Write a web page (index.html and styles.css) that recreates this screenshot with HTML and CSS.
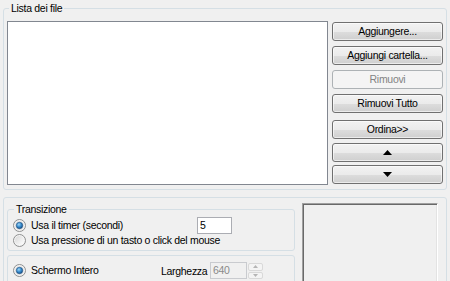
FILE: index.html
```html
<!DOCTYPE html>
<html>
<head>
<meta charset="utf-8">
<link rel="stylesheet" href="styles.css">
</head>
<body>
<svg class="defs" width="0" height="0">
  <defs>
    <linearGradient id="rbfill" x1="0" y1="0" x2="1" y2="1">
      <stop offset="0" stop-color="#d8d8d8"/>
      <stop offset="1" stop-color="#ffffff"/>
    </linearGradient>
    <radialGradient id="dot" cx="0.4" cy="0.35" r="0.7">
      <stop offset="0" stop-color="#9fd6f5"/>
      <stop offset="0.5" stop-color="#3b8fd0"/>
      <stop offset="1" stop-color="#124a82"/>
    </radialGradient>
    <g id="rb-off">
      <circle cx="6.5" cy="6.5" r="6" fill="#f4f4f4" stroke="#8e8f8f"/>
      <circle cx="6.5" cy="6.5" r="4.5" fill="url(#rbfill)"/>
    </g>
    <g id="rb-on">
      <circle cx="6.5" cy="6.5" r="6" fill="#f4f4f4" stroke="#8e8f8f"/>
      <circle cx="6.5" cy="6.5" r="4.5" fill="#e2e2e2"/>
      <circle cx="6.5" cy="6.5" r="3.2" fill="url(#dot)" stroke="#1d4f82" stroke-width="0.6"/>
    </g>
  </defs>
</svg>
<div class="win">
  <fieldset class="group files">
    <legend>Lista dei file</legend>
    <div class="files-body">
      <div class="listbox"></div>
      <div class="btncol">
        <div class="btn b1">Aggiungere...</div>
        <div class="btn b2">Aggiungi cartella...</div>
        <div class="btn b2 disabled">Rimuovi</div>
        <div class="btn b2">Rimuovi Tutto</div>
        <div class="btn b3">Ordina&gt;&gt;</div>
        <div class="btn b4"><svg width="9" height="5" viewBox="0 0 9 5"><polygon points="4.5,0 9,5 0,5" fill="#000"/></svg></div>
        <div class="btn b5"><svg width="9" height="5" viewBox="0 0 9 5"><polygon points="0,0 9,0 4.5,5" fill="#000"/></svg></div>
      </div>
    </div>
  </fieldset>
  <div class="panel">
    <div class="leftcol">
      <fieldset class="group trans">
        <legend>Transizione</legend>
        <div class="row r1">
          <div class="radio w1"><svg class="rb" width="13" height="13"><use href="#rb-on"/></svg><span>Usa il timer (secondi)</span></div>
          <div class="textbox">5</div>
        </div>
        <div class="row r2">
          <div class="radio"><svg class="rb" width="13" height="13"><use href="#rb-off"/></svg><span>Usa pressione di un tasto o click del mouse</span></div>
        </div>
      </fieldset>
      <div class="group screen">
        <div class="row r3">
          <div class="radio w2"><svg class="rb" width="13" height="13"><use href="#rb-on"/></svg><span>Schermo Intero</span></div>
          <span class="lbl">Larghezza</span>
          <div class="textbox dis">640</div>
          <div class="spin">
            <div class="sp"><svg width="5" height="3" viewBox="0 0 5 3"><polygon points="2.5,0 5,3 0,3" fill="#b5b5b5"/></svg></div>
            <div class="sp"><svg width="5" height="3" viewBox="0 0 5 3"><polygon points="0,0 5,0 2.5,3" fill="#b5b5b5"/></svg></div>
          </div>
        </div>
      </div>
    </div>
    <div class="preview"></div>
  </div>
</div>
</body>
</html>
```
FILE: styles.css
```css
html, body {
  margin: 0;
  padding: 0;
}
body {
  background: #f0f0f0;
  font-family: "Liberation Sans", Arial, sans-serif;
  font-size: 10.5px;
  letter-spacing: -0.3px;
  color: #000;
  width: 450px;
  height: 281px;
  overflow: hidden;
}
.defs {
  position: absolute;
  width: 0;
  height: 0;
}
.win {
  display: flex;
  flex-direction: column;
}
.group {
  border: 1px solid #d5dfe5;
  border-radius: 3px;
  box-sizing: border-box;
  min-width: 0;
}
fieldset.group legend {
  padding: 0 2px;
  line-height: 13px;
  height: 13px;
}
.files {
  width: 444px;
  margin: 2px 0 0 3px;
  padding: 6px 3px 4px 3px;
}
.files legend {
  margin-left: 2px;
}
.files-body {
  display: flex;
  gap: 4px;
}
.listbox {
  width: 321px;
  height: 164px;
  box-sizing: border-box;
  background: #fff;
  border: 1px solid #828790;
}
.btncol {
  display: flex;
  flex-direction: column;
  width: 111px;
}
.btn {
  height: 19px;
  box-sizing: border-box;
  border: 1px solid #707070;
  border-radius: 3px;
  background: linear-gradient(to bottom, #f2f2f2 0%, #ebebeb 50%, #dddddd 51%, #cfcfcf 100%);
  box-shadow: inset 0 0 0 1px rgba(255,255,255,0.6);
  display: flex;
  align-items: center;
  justify-content: center;
  line-height: 13px;
}
.btn svg { display: block; }
.b1 { margin-top: 1px; }
.b2 { margin-top: 5px; }
.b3 { margin-top: 7px; }
.b4 { margin-top: 4px; }
.b5 { margin-top: 3px; }
.btn.disabled {
  border-color: #adb2b5;
  background: #f4f4f4;
  box-shadow: none;
  color: #838383;
}
.panel {
  width: 444px;
  height: 100px;
  box-sizing: border-box;
  margin: 7px 0 0 3px;
  padding: 5px 8px 0 3px;
  border: 1px solid #d5dfe5;
  border-radius: 3px;
  display: flex;
  gap: 7px;
}
.leftcol {
  width: 288px;
  display: flex;
  flex-direction: column;
}
.trans {
  margin: 0;
  padding: 1px 0 3px 5px;
  width: 288px;
}
.trans legend {
  margin-left: 1px;
}
.row {
  display: flex;
  align-items: center;
}
.r1 { height: 17px; }
.r2 { height: 13px; }
.radio {
  display: flex;
  align-items: center;
  gap: 5px;
  white-space: nowrap;
  line-height: 13px;
}
.rb { display: block; flex: none; }
.w1 { width: 184px; }
.w2 { width: 148px; }
.textbox {
  width: 35px;
  height: 17px;
  box-sizing: border-box;
  border: 1px solid #abadb3;
  background: #fff;
  padding-left: 2px;
  line-height: 15px;
}
.screen {
  margin-top: 4px;
  padding: 6px 0 0 5px;
  height: 40px;
}
.r3 { height: 17px; }
.lbl {
  width: 49px;
}
.textbox.dis {
  width: 37px;
  border-color: #c9cbcf;
  background: #f0f0f0;
  color: #8a8a8a;
}
.spin {
  width: 15px;
  height: 17px;
  margin-left: 1px;
  display: flex;
  flex-direction: column;
  gap: 1px;
  padding-top: 1px;
  box-sizing: border-box;
}
.sp {
  flex: 1;
  border: 1px solid #d9d9d9;
  border-radius: 2px;
  background: #f4f4f4;
  display: flex;
  align-items: center;
  justify-content: center;
}
.sp svg { display: block; }
.preview {
  width: 136px;
  height: 100px;
  box-sizing: border-box;
  border-top: 1px solid #a0a0a0;
  border-left: 1px solid #a0a0a0;
  border-right: 1px solid #ffffff;
  border-bottom: 1px solid #ffffff;
  box-shadow: inset 1px 1px 0 #696969, inset -1px -1px 0 #e3e3e3;
  background: #f0f0f0;
}
```
